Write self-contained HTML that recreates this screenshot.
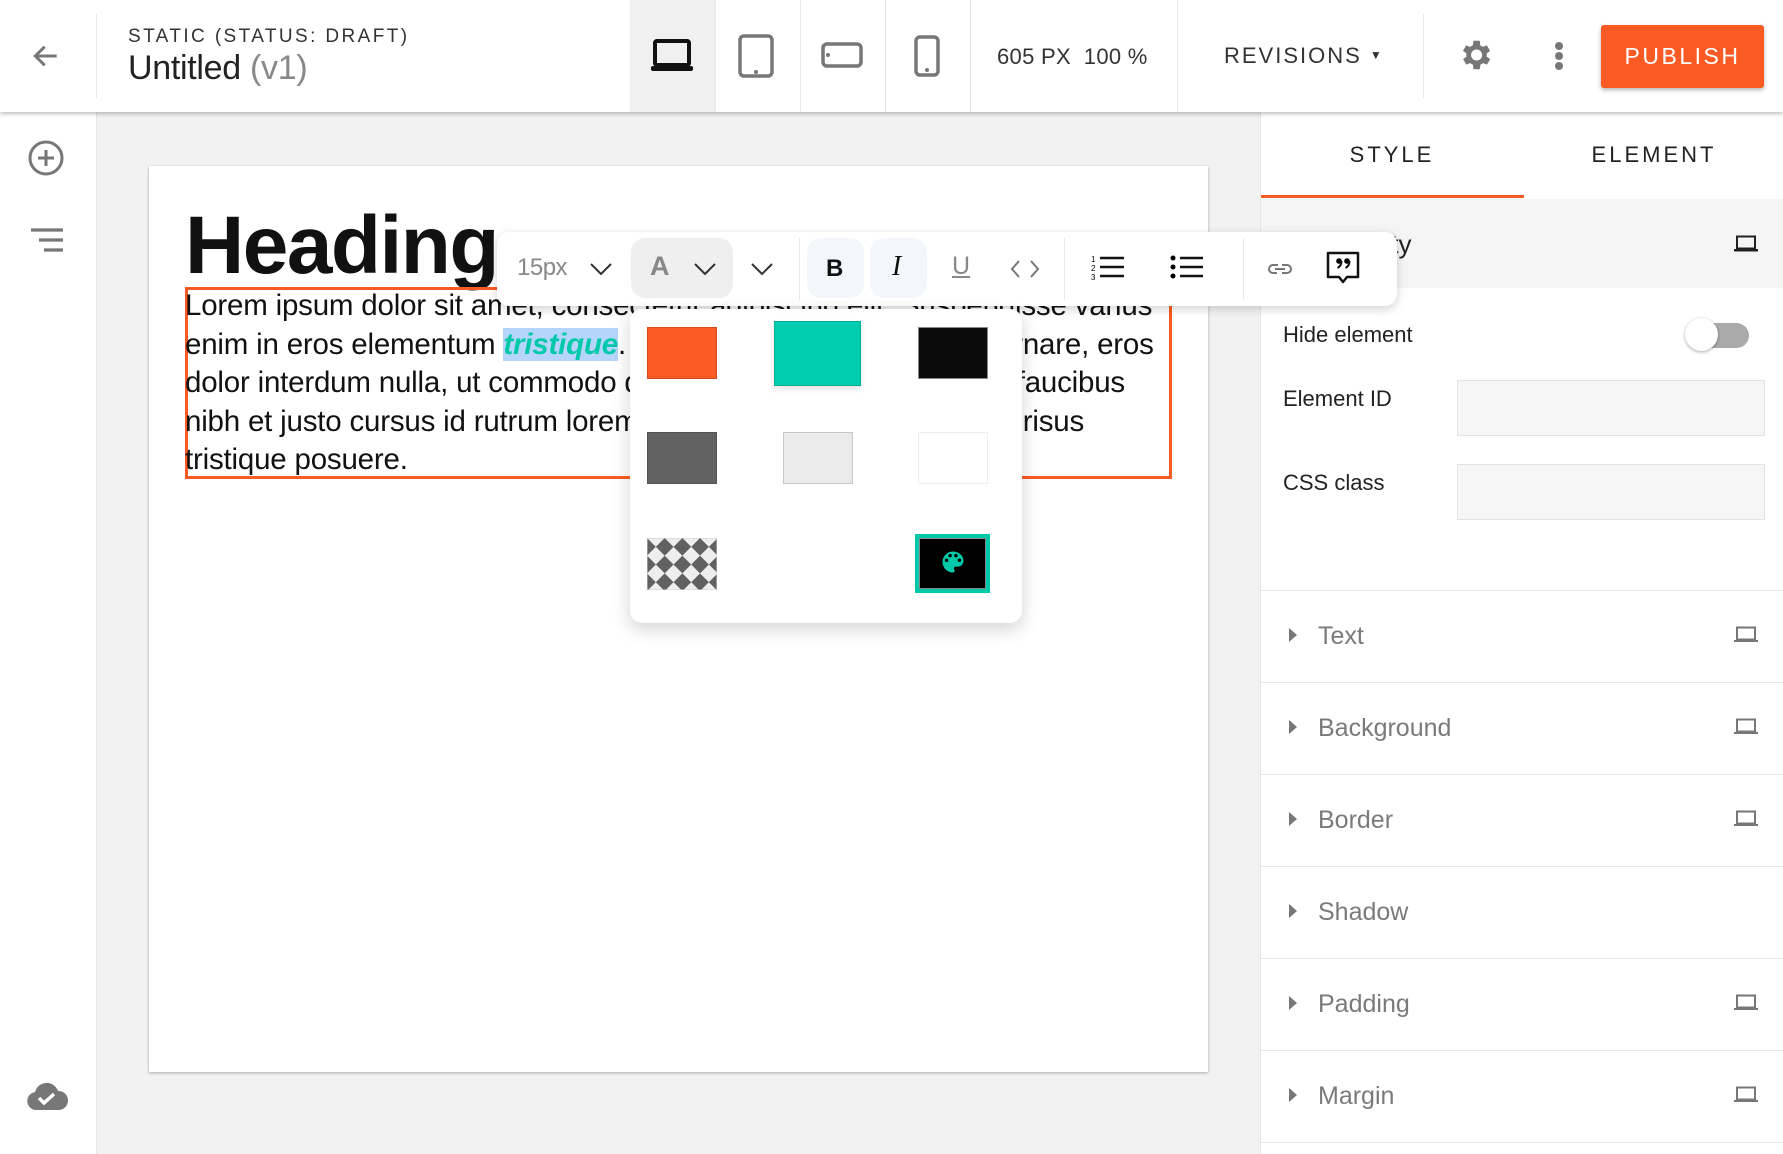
<!DOCTYPE html>
<html><head><meta charset="utf-8">
<style>
*{margin:0;padding:0;box-sizing:border-box}
body{width:1783px;height:1154px;overflow:hidden;background:#f2f2f2;font-family:"Liberation Sans",sans-serif;position:relative;color:#222}
.a{position:absolute}
.hdr{left:0;top:0;width:1783px;height:112px;background:#fff;box-shadow:0 2px 4px rgba(0,0,0,.25);z-index:5}
.vs{width:1px;background:#e8e8e8}
.side{left:0;top:112px;width:97px;height:1042px;background:#fff;border-right:1px solid #e6e6e6}
.panel{left:1260px;top:112px;width:523px;height:1042px;background:#fff;border-left:1px solid #e6e6e6}
.sec{left:0;width:523px;height:1px;background:#e6e6e6}
.lab{left:57px;font-size:25px;color:#7a7a7a}
.tri{left:28px;width:0;height:0;border-top:7px solid transparent;border-bottom:7px solid transparent;border-left:8px solid #777}
.sw{border:1px solid rgba(0,0,0,.15)}
</style></head><body>

<div class="a hdr">
  <svg class="a" style="left:30px;top:40px" width="32" height="32" viewBox="0 0 24 24"><path d="M20 12H5M11 5l-7 7 7 7" fill="none" stroke="#777" stroke-width="2.2"/></svg>
  <div class="a vs" style="left:96px;top:14px;height:84px"></div>
  <div class="a" style="left:128px;top:26px;font-size:19px;letter-spacing:2.4px;color:#333">STATIC (STATUS: DRAFT)</div>
  <div class="a" style="left:128px;top:49px;font-size:34px;color:#222;letter-spacing:-0.3px">Untitled <span style="color:#888">(v1)</span></div>
  <div class="a" style="left:630px;top:0;width:85px;height:112px;background:#f0f0f0"></div>
  <div class="a vs" style="left:715px;top:0;height:112px"></div>
  <div class="a vs" style="left:800px;top:0;height:112px"></div>
  <div class="a vs" style="left:885px;top:0;height:112px"></div>
  <div class="a vs" style="left:970px;top:0;height:112px"></div>
  <div class="a vs" style="left:1177px;top:0;height:112px"></div>
  <div class="a vs" style="left:1423px;top:14px;height:84px"></div>
  <svg class="a" style="left:651px;top:38px" width="42" height="34" viewBox="0 0 42 34"><rect x="4" y="3" width="34" height="24" rx="2" fill="none" stroke="#111" stroke-width="4"/><rect x="0" y="28" width="42" height="5" rx="2" fill="#111"/></svg>
  <svg class="a" style="left:738px;top:34px" width="36" height="44" viewBox="0 0 36 44"><rect x="2" y="2" width="32" height="40" rx="4" fill="none" stroke="#777" stroke-width="3.5"/><circle cx="18" cy="38" r="2" fill="#777"/></svg>
  <svg class="a" style="left:821px;top:42px" width="42" height="26" viewBox="0 0 42 26"><rect x="2" y="2" width="38" height="22" rx="4" fill="none" stroke="#777" stroke-width="3.5"/><circle cx="7" cy="13" r="2" fill="#777"/></svg>
  <svg class="a" style="left:914px;top:35px" width="26" height="42" viewBox="0 0 26 42"><rect x="2" y="2" width="22" height="38" rx="4" fill="none" stroke="#777" stroke-width="3.5"/><circle cx="13" cy="35" r="2" fill="#777"/></svg>
  <div class="a" style="left:997px;top:44px;font-size:22px;color:#333;letter-spacing:0.3px">605 PX &nbsp;100 %</div>
  <div class="a" style="left:1224px;top:43px;font-size:22px;letter-spacing:2px;color:#333">REVISIONS <span style="font-size:12px;position:relative;top:-4px">▼</span></div>
  <svg class="a" style="left:1456px;top:36px" width="38" height="38" viewBox="0 0 24 24"><path fill="#777" d="M19.4 13a7.5 7.5 0 0 0 0-2l2.1-1.6-2-3.5-2.5 1a7 7 0 0 0-1.7-1L15 3h-4l-.4 2.9a7 7 0 0 0-1.7 1l-2.5-1-2 3.5L6.6 11a7.5 7.5 0 0 0 0 2l-2.1 1.6 2 3.5 2.5-1a7 7 0 0 0 1.7 1L11 21h4l.4-2.9a7 7 0 0 0 1.7-1l2.5 1 2-3.5zM13 15.5a3.5 3.5 0 1 1 0-7 3.5 3.5 0 0 1 0 7z"/></svg>
  <div class="a" style="left:1555px;top:42px;width:8px;height:8px;border-radius:50%;background:#777;box-shadow:0 10px 0 #777,0 20px 0 #777"></div>
  <div class="a" style="left:1601px;top:25px;width:163px;height:63px;background:#fa5a23;border-radius:3px;box-shadow:0 2px 4px rgba(0,0,0,.3);color:#fff;font-size:23px;letter-spacing:2.5px;text-align:center;line-height:63px">PUBLISH</div>
</div>

<div class="a side">
  <svg class="a" style="left:27px;top:27px" width="38" height="38" viewBox="0 0 38 38"><circle cx="19" cy="19" r="16" fill="none" stroke="#777" stroke-width="3"/><path d="M19 11v16M11 19h16" stroke="#777" stroke-width="3"/></svg>
  <svg class="a" style="left:30px;top:116px" width="34" height="24" viewBox="0 0 34 24"><path d="M1 2h32M9 12h24M14 22h19" stroke="#777" stroke-width="3.2"/></svg>
  <svg class="a" style="left:26px;top:970px" width="42" height="29" viewBox="0 0 42 29"><path fill="#777" d="M10 28a9 9 0 0 1-1-17.9A12 12 0 0 1 32 9a9.5 9.5 0 0 1 1 19z"/><path d="M13 16l5 5 10-9" fill="none" stroke="#fff" stroke-width="3.5"/></svg>
</div>

<div class="a" style="left:149px;top:166px;width:1059px;height:906px;background:#fff;box-shadow:0 1px 3px rgba(0,0,0,.3)"></div>
<div class="a" style="left:185px;top:196px;font-size:82px;font-weight:bold;color:#111;line-height:100px;letter-spacing:-1.5px">Heading</div>
<div class="a" style="left:185px;top:287px;width:987px;height:192px;border:3px solid #fa5a23"></div>
<div class="a" style="left:185px;top:287px;font-size:29.5px;line-height:38.6px;color:#111;white-space:nowrap;letter-spacing:-0.2px">Lorem ipsum dolor sit amet, consectetur adipiscing elit. Suspendisse varius<br>enim in eros elementum <span style="background:#b6d5fa;color:#00c9aa;font-weight:bold;font-style:italic">tristique</span>. Duis cursus, mi quis viverra ornare, eros<br>dolor interdum nulla, ut commodo diam libero vitae erat. Aenean faucibus<br>nibh et justo cursus id rutrum lorem imperdiet. Nunc ut sem vitae risus<br>tristique posuere.</div>

<div class="a panel">
  <div class="a" style="left:0;top:30px;width:262px;text-align:center;font-size:22px;letter-spacing:3px;color:#222">STYLE</div>
  <div class="a" style="left:262px;top:30px;width:262px;text-align:center;font-size:22px;letter-spacing:3px;color:#222">ELEMENT</div>
  <div class="a" style="left:0;top:83px;width:263px;height:3px;background:#fa5a23"></div>
  <div class="a" style="left:0;top:87px;width:523px;height:89px;background:#f5f5f5"></div>
  <div class="a" style="left:57px;top:117px;font-size:26px;color:#222">Visibility</div>
  <svg class="a" style="left:473px;top:123px" width="24" height="18" viewBox="0 0 24 18"><rect x="3" y="1.5" width="18" height="12" fill="none" stroke="#222" stroke-width="2"/><rect x="0" y="14" width="24" height="2.5" fill="#222"/></svg>
  <div class="a" style="left:22px;top:210px;font-size:22px;color:#222">Hide element</div>
  <div class="a" style="left:435px;top:211px;width:53px;height:25px;border-radius:13px;background:#aaa"></div>
  <div class="a" style="left:424px;top:206px;width:33px;height:33px;border-radius:50%;background:#fff;box-shadow:0 1px 3px rgba(0,0,0,.35)"></div>
  <div class="a" style="left:22px;top:274px;font-size:22px;color:#222">Element ID</div>
  <div class="a" style="left:196px;top:268px;width:308px;height:56px;background:#f6f6f6;border:1px solid #e3e3e3"></div>
  <div class="a" style="left:22px;top:358px;font-size:22px;color:#222">CSS class</div>
  <div class="a" style="left:196px;top:352px;width:308px;height:56px;background:#f6f6f6;border:1px solid #e3e3e3"></div>
  <div class="a sec" style="top:478px"></div>
  <div class="a sec" style="top:570px"></div>
  <div class="a sec" style="top:662px"></div>
  <div class="a sec" style="top:754px"></div>
  <div class="a sec" style="top:846px"></div>
  <div class="a sec" style="top:938px"></div>
  <div class="a sec" style="top:1030px"></div>
  <div class="a tri" style="top:516px"></div><div class="a lab" style="top:510px">Text</div>
  <div class="a tri" style="top:608px"></div><div class="a lab" style="top:602px">Background</div>
  <div class="a tri" style="top:700px"></div><div class="a lab" style="top:694px">Border</div>
  <div class="a tri" style="top:792px"></div><div class="a lab" style="top:786px">Shadow</div>
  <div class="a tri" style="top:884px"></div><div class="a lab" style="top:878px">Padding</div>
  <div class="a tri" style="top:976px"></div><div class="a lab" style="top:970px">Margin</div>
  <svg class="a" style="left:473px;top:514px" width="24" height="18" viewBox="0 0 24 18"><rect x="3" y="1.5" width="18" height="12" fill="none" stroke="#777" stroke-width="2"/><rect x="0" y="14" width="24" height="2" fill="#777"/></svg>
  <svg class="a" style="left:473px;top:606px" width="24" height="18" viewBox="0 0 24 18"><rect x="3" y="1.5" width="18" height="12" fill="none" stroke="#777" stroke-width="2"/><rect x="0" y="14" width="24" height="2" fill="#777"/></svg>
  <svg class="a" style="left:473px;top:698px" width="24" height="18" viewBox="0 0 24 18"><rect x="3" y="1.5" width="18" height="12" fill="none" stroke="#777" stroke-width="2"/><rect x="0" y="14" width="24" height="2" fill="#777"/></svg>
  <svg class="a" style="left:473px;top:882px" width="24" height="18" viewBox="0 0 24 18"><rect x="3" y="1.5" width="18" height="12" fill="none" stroke="#777" stroke-width="2"/><rect x="0" y="14" width="24" height="2" fill="#777"/></svg>
  <svg class="a" style="left:473px;top:974px" width="24" height="18" viewBox="0 0 24 18"><rect x="3" y="1.5" width="18" height="12" fill="none" stroke="#777" stroke-width="2"/><rect x="0" y="14" width="24" height="2" fill="#777"/></svg>
</div>

<div class="a" style="left:497px;top:232px;width:900px;height:74px;background:#fff;border-radius:12px;box-shadow:0 3px 10px rgba(0,0,0,.18);z-index:10">
  <div class="a" style="left:20px;top:22px;font-size:24px;color:#888;letter-spacing:-0.5px">15px</div>
  <svg class="a" style="left:92px;top:29px" width="24" height="16" viewBox="0 0 24 16"><path d="M2 3l10 10 10-10" fill="none" stroke="#333" stroke-width="2"/></svg>
  <div class="a" style="left:134px;top:6px;width:102px;height:60px;border-radius:14px;background:#efefef"></div>
  <div class="a" style="left:153px;top:19px;font-size:27px;font-weight:bold;color:#888">A</div>
  <svg class="a" style="left:196px;top:29px" width="24" height="16" viewBox="0 0 24 16"><path d="M2 3l10 10 10-10" fill="none" stroke="#333" stroke-width="2"/></svg>
  <svg class="a" style="left:253px;top:29px" width="24" height="16" viewBox="0 0 24 16"><path d="M2 3l10 10 10-10" fill="none" stroke="#333" stroke-width="2"/></svg>
  <div class="a vs" style="left:302px;top:6px;height:62px"></div>
  <div class="a" style="left:310px;top:6px;width:57px;height:60px;border-radius:14px;background:#f3f6fb"></div>
  <div class="a" style="left:329px;top:23px;font-size:24px;font-weight:bold;color:#111">B</div>
  <div class="a" style="left:373px;top:6px;width:57px;height:60px;border-radius:14px;background:#f3f6fb"></div>
  <div class="a" style="left:395px;top:19px;font-size:28px;font-style:italic;font-family:'Liberation Serif',serif;color:#111">I</div>
  <div class="a" style="left:455px;top:20px;font-size:25px;color:#888;text-decoration:underline">U</div>
  <svg class="a" style="left:513px;top:27px" width="30" height="20" viewBox="0 0 30 20"><path d="M9 2L2 10l7 8M21 2l7 8-7 8" fill="none" stroke="#777" stroke-width="2"/></svg>
  <div class="a vs" style="left:567px;top:6px;height:62px"></div>
  <svg class="a" style="left:594px;top:22px" width="34" height="28" viewBox="0 0 34 28"><text x="0" y="8" font-size="8" font-family="Liberation Sans">1</text><text x="0" y="17" font-size="8" font-family="Liberation Sans">2</text><text x="0" y="26" font-size="8" font-family="Liberation Sans">3</text><path d="M9 4h24M9 13h24M9 22h24" stroke="#111" stroke-width="2.5"/></svg>
  <svg class="a" style="left:673px;top:22px" width="34" height="28" viewBox="0 0 34 28"><circle cx="3" cy="4" r="2.5"/><circle cx="3" cy="13" r="2.5"/><circle cx="3" cy="22" r="2.5"/><path d="M10 4h23M10 13h23M10 22h23" stroke="#111" stroke-width="2.5"/></svg>
  <div class="a vs" style="left:746px;top:6px;height:62px"></div>
  <svg class="a" style="left:768px;top:27px" width="30" height="20" viewBox="0 0 30 20"><path d="M13 6H8a4 4 0 0 0 0 8h4M17 6h5a4 4 0 0 1 0 8h-5M10 10h10" fill="none" stroke="#777" stroke-width="2"/></svg>
  <svg class="a" style="left:828px;top:18px" width="36" height="38" viewBox="0 0 36 38"><path d="M3 3h30v24H22l-4 5-4-5H3z" fill="none" stroke="#111" stroke-width="2.5" stroke-linejoin="round"/><circle cx="14" cy="11" r="2.8"/><circle cx="22" cy="11" r="2.8"/><path d="M16.5 11q0 5-4 7M24.5 11q0 5-4 7" fill="none" stroke="#111" stroke-width="2"/></svg>
</div>

<div class="a" style="left:630px;top:309px;width:392px;height:314px;background:#fff;border-radius:12px;box-shadow:0 6px 18px rgba(0,0,0,.18);z-index:11">
  <div class="a sw" style="left:17px;top:18px;width:70px;height:52px;background:#fa5a23"></div>
  <div class="a sw" style="left:144px;top:12px;width:87px;height:65px;background:#00cdb0;box-shadow:0 3px 6px rgba(0,0,0,.12)"></div>
  <div class="a sw" style="left:288px;top:18px;width:70px;height:52px;background:#0b0b0b;border-color:#888"></div>
  <div class="a sw" style="left:17px;top:123px;width:70px;height:52px;background:#626262"></div>
  <div class="a sw" style="left:153px;top:123px;width:70px;height:52px;background:#e9eae9"></div>
  <div class="a sw" style="left:288px;top:123px;width:70px;height:52px;background:#fff;border-color:#eee"></div>
  <svg class="a" style="left:17px;top:229px" width="70" height="52" viewBox="0 0 70 52"><defs><pattern id="ck" width="25" height="25" patternUnits="userSpaceOnUse" patternTransform="translate(0,0) rotate(45)"><rect width="25" height="25" fill="#eee"/><rect width="12.5" height="12.5" fill="#616161"/><rect x="12.5" y="12.5" width="12.5" height="12.5" fill="#616161"/></pattern></defs><rect width="70" height="52" fill="url(#ck)" stroke="#ccc"/></svg>
  <div class="a" style="left:285px;top:225px;width:75px;height:59px;background:#000;border:4px solid #00c9aa;box-shadow:inset 0 0 0 1px #888"></div>
  <svg class="a" style="left:309px;top:239px" width="28" height="28" viewBox="0 0 24 24"><path fill="#00c9aa" d="M12 3a9 9 0 0 0 0 18 1.5 1.5 0 0 0 1.1-2.5 1.5 1.5 0 0 1 1.1-2.5H16a5 5 0 0 0 5-5c0-4.4-4-8-9-8zM6.5 12a1.5 1.5 0 1 1 0-3 1.5 1.5 0 0 1 0 3zm3-4a1.5 1.5 0 1 1 0-3 1.5 1.5 0 0 1 0 3zm5 0a1.5 1.5 0 1 1 0-3 1.5 1.5 0 0 1 0 3zm3 4a1.5 1.5 0 1 1 0-3 1.5 1.5 0 0 1 0 3z"/></svg>
</div>
</body></html>
